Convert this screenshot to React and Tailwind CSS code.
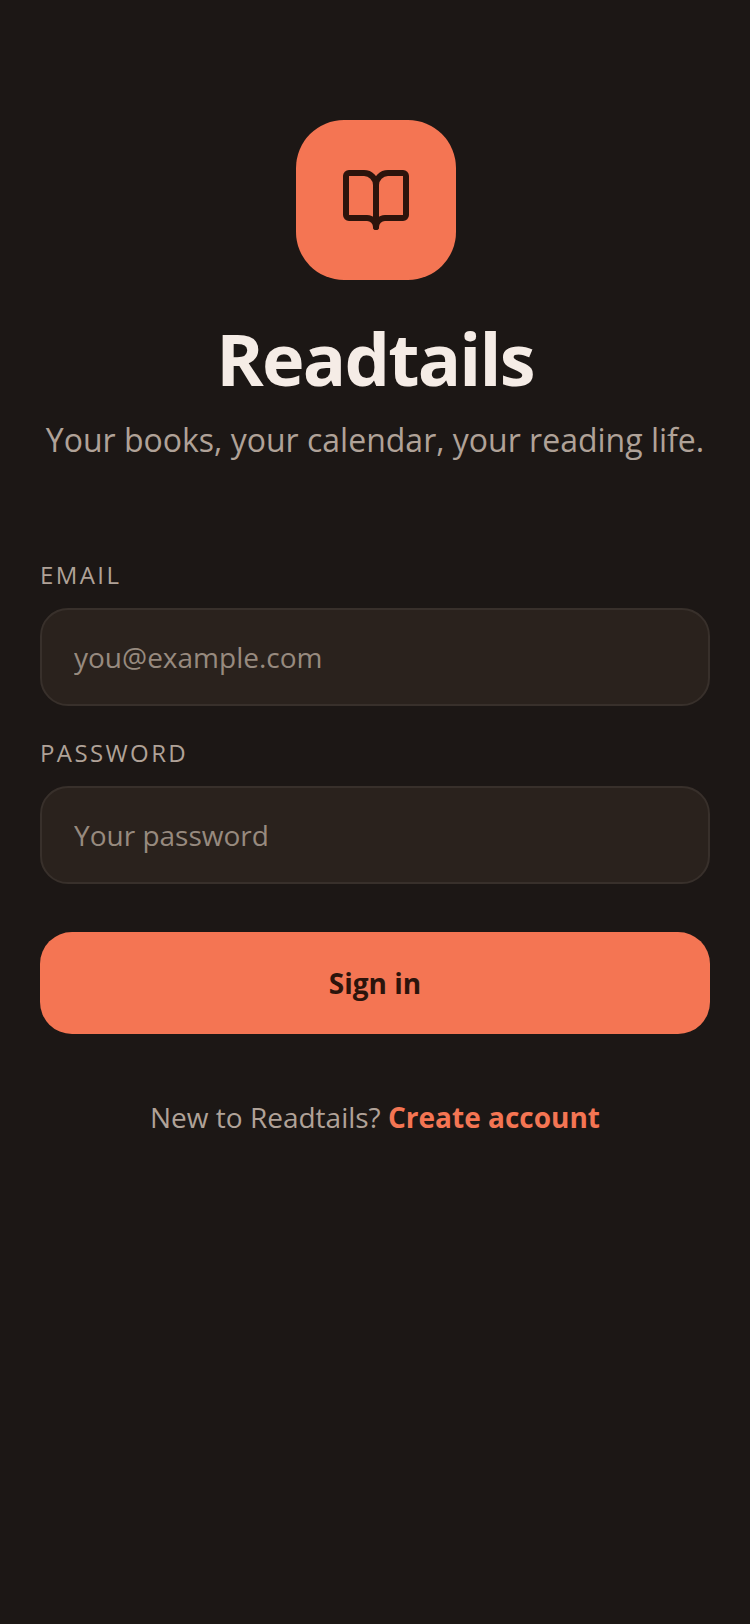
import React from "react";
import { BookOpen } from "lucide-react";

export default function App() {
  return (
    <div className="min-h-[1624px] bg-[#1c1715] px-10 pt-[120px] font-['Open_Sans',sans-serif]">
      <div className="flex flex-col items-center">
        <div className="ml-[2px] flex h-40 w-40 items-center justify-center rounded-[48px] bg-[#f47553]">
          <BookOpen size={72} strokeWidth={2} className="text-[#2c140c]" />
        </div>
        <h1 className="mt-6 text-[72px] leading-[108px] font-bold tracking-[-1.8px] text-[#f5ece6]">Readtails</h1>
        <p className="mt-[6px] text-[32px] leading-[44px] whitespace-nowrap text-[#b0a298]">Your books, your calendar, your reading life.</p>
      </div>
      <form className="mt-[97px] flex flex-col">
        <label className="text-[24px] leading-[32px] tracking-[2.4px] text-[#b0a298]">EMAIL</label>
        <input
          placeholder="you@example.com"
          className="mt-[17px] h-[98px] w-full rounded-[28px] border-2 border-[#38302b] bg-[#2a221d] px-8 text-[28px] text-[#f5ece6] outline-none placeholder:text-[#978a7f]"
        />
        <label className="mt-[31px] text-[24px] leading-[32px] tracking-[2.4px] text-[#b0a298]">PASSWORD</label>
        <input
          placeholder="Your password"
          className="mt-[17px] h-[98px] w-full rounded-[28px] border-2 border-[#38302b] bg-[#2a221d] px-8 text-[28px] text-[#f5ece6] outline-none placeholder:text-[#978a7f]"
        />
        <button type="button" className="mt-12 h-[102px] w-full rounded-[32px] bg-[#f47553] text-[28px] font-bold text-[#2c140c]">Sign in</button>
      </form>
      <p className="mt-[63px] text-center text-[28px] leading-[40px] text-[#b0a298]">
        New to Readtails? <span className="font-bold text-[#f47553]">Create account</span>
      </p>
    </div>
  );
}
